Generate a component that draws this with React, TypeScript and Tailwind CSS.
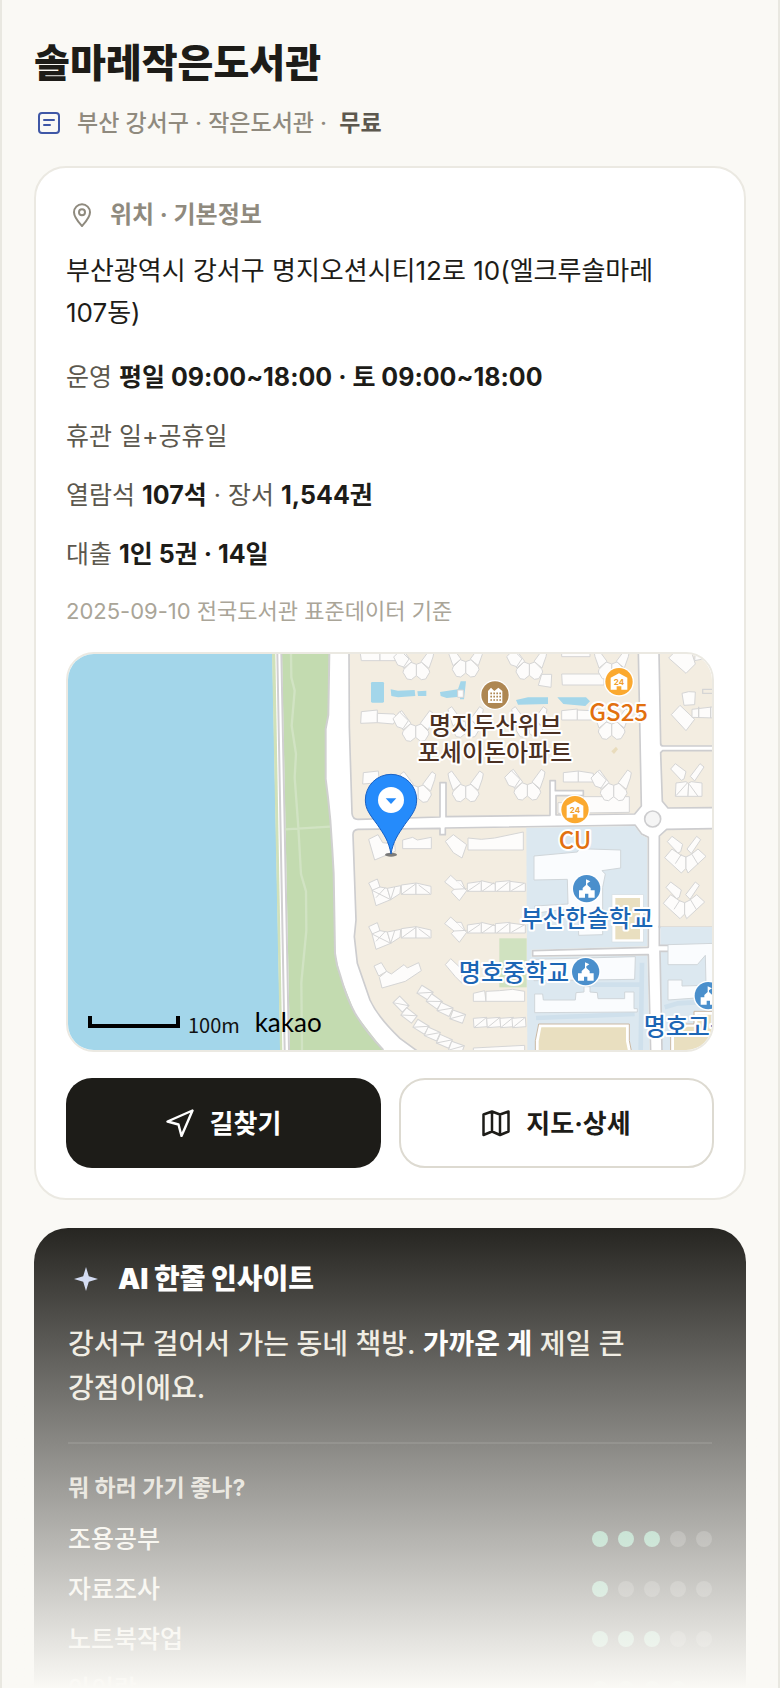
import React from "react";

type Pt = string;

const fontStack = "font-['Inter','Noto_Sans_CJK_KR',sans-serif]";

/* ---------- map data ---------- */

function Butterfly({ x, y }: { x: number; y: number }) {
  const half = (
    <>
      <polygon points="0,-46 16,-52 38,-30 40,-22 28,-2 15,0 0,-12" />
      <polygon points="14,-54 42,-92 53,-84 50,-68 38,-34 26,-44" />
    </>
  );
  return (
    <g transform={`translate(${x} ${y})`}>
      {half}
      <g transform="scale(-1 1)">{half}</g>
    </g>
  );
}

function Arm({ x, y }: { x: number; y: number }) {
  return (
    <g transform={`translate(${x} ${y})`}>
      <polygon points="-68,-68 -48,-88 -22,-62 -38,-38 -56,-44" />
    </g>
  );
}

function WideButterfly({ x, y, boxed }: { x: number; y: number; boxed?: boolean }) {
  return (
    <g transform={`translate(${x} ${y})`}>
      <polygon points="-54,-82 -40,-98 -8,-74 -14,-52 -22,-48" />
      <polygon points="5,-60 34,-98 46,-88 18,-46" />
      {boxed ? (
        <>
          <polygon points="-38,-40 -8,-44 0,-38 -2,0 -40,0" />
          <polygon points="-2,0 0,-40 8,-44 40,-40 40,0" />
          <path d="M-38 -2 L-4 -40 M2 -36 L28 0" />
        </>
      ) : (
        <>
          <polygon points="-40,-60 -62,-34 -12,12 2,-2 2,-36 -14,-42" />
          <polygon points="2,-2 2,-36 18,-44 38,-60 62,-38 8,12" />
          <path d="M-30 -16 L-12 -44 M38 -14 L20 -44" />
        </>
      )}
    </g>
  );
}

function WestWing({ y }: { y: number }) {
  return (
    <g transform={`translate(902 ${y})`}>
      <polygon points="0,12 26,0 34,24 12,36" />
      <polygon points="10,34 34,24 56,28 66,62 22,80" />
      <polygon points="56,28 96,20 94,44 66,62" />
      <polygon points="98,18 142,12 142,46 98,46" />
      <polygon points="142,12 187,22 187,46 142,46" />
      <path d="M10 34 L66 62 M66 62 L78 24 M98 46 L142 14 M150 18 L184 44 M22 56 L50 26" />
    </g>
  );
}

function EastWing({ y }: { y: number }) {
  return (
    <g transform={`translate(1130 ${y})`}>
      <polygon points="0,20 18,0 44,24 66,46 44,76 20,50 28,42" />
      <polygon points="68,24 110,18 110,48 68,48" />
      <polygon points="110,16 152,26 152,48 110,48" />
      <polygon points="152,20 196,16 196,48 152,48" />
      <polygon points="196,18 242,24 242,48 196,48" />
      <path d="M28 42 L66 40 M34 16 L50 16 L60 38 M68 48 L106 22 M112 48 L148 22 M156 48 L192 20 M200 46 L238 24" />
    </g>
  );
}

function Chain({ points }: { points: number[][] }) {
  return (
    <>
      {points.map(([x, y, a], i) => (
        <g key={i} transform={`translate(${x} ${y}) rotate(${a})`}>
          <polygon points="-20,-13 20,-16 22,12 -18,15" />
          <path d="M-18 15 L20 -16" />
        </g>
      ))}
    </>
  );
}

const buildings: Pt[] = [
  "876,-8 936,-8 936,20 880,20",
  "936,-8 992,-4 981,20 936,20",
  "880,173 928,168 928,206 878,208",
  "928,178 978,180 988,190 976,210 928,206",
  "886,356 931,351 934,386 884,390",
  "1421,61 1451,61 1449,100 1411,94",
  "1481,60 1608,60 1608,93 1483,93",
  "1481,-8 1566,-8 1566,8 1481,8",
  "1481,170 1528,165 1528,198 1481,198",
  "1528,168 1571,170 1571,198 1528,198",
  "1486,356 1531,351 1531,384 1486,384",
  "1531,351 1576,358 1576,384 1531,384",
  "1546,428 1684,428 1684,475 1470,478 1470,446 1546,446",
  "1802,12 1822,-8 1870,-8 1882,30 1854,58",
  "1882,-8 1910,-8 1910,14 1880,20",
  "1842,118 1862,113 1882,114 1880,152 1848,154",
  "1810,182 1836,154 1880,196 1854,230",
  "1872,166 1940,158 1940,192 1872,190",
  "902,556 930,542 944,566 980,570 982,592 920,618",
  "1004,558 1034,550 1048,558 1090,550 1090,584 1004,584",
  "1132,562 1156,542 1196,572 1182,612 1156,596",
  "1200,552 1240,556 1280,552 1366,534 1366,588 1200,588",
  "918,936 940,926 956,952 932,966",
  "934,970 956,952 970,960 1008,932 1018,942 1052,926 1060,950 1012,982 942,1002",
  "1132,932 1148,914 1182,946 1182,988 1162,968",
  "1216,1018 1250,1010 1254,1042 1216,1042",
  "1254,1012 1294,1010 1334,1006 1370,1012 1370,1042 1254,1042",
  "1216,1182 1370,1174 1370,1195 1216,1195",
];

const campus: Pt[] = [
  "1398,606 1528,594 1534,584 1658,588 1658,642 1602,650 1612,660 1604,700 1604,842 1532,844 1530,760 1400,778 1400,756 1500,750 1498,676 1398,678",
  "1398,916 1702,908 1700,976 1398,980",
  "1400,1020 1424,1020 1426,1038 1522,1038 1524,1016 1548,1014 1548,998 1566,998 1566,1014 1588,1016 1590,1034 1670,1034 1670,1014 1698,1014 1698,1064 1708,1064 1708,1074 1400,1076",
  "1800,872 1940,868 1940,1028 1800,1038 1800,978 1842,978 1842,996 1914,994 1912,904 1888,932 1800,932",
];

function Label({
  x,
  y,
  fill,
  anchor = "middle",
  children,
}: {
  x: number;
  y: number;
  fill: string;
  anchor?: "start" | "middle";
  children: React.ReactNode;
}) {
  return (
    <text
      x={x}
      y={y}
      textAnchor={anchor}
      fill={fill}
      stroke="#ffffff"
      strokeWidth={12}
      strokeLinejoin="round"
      paintOrder="stroke"
      className="font-['Noto_Sans_CJK_KR',sans-serif] text-[72px] font-medium"
    >
      {children}
    </text>
  );
}

function Store({ x, y }: { x: number; y: number }) {
  return (
    <g transform={`translate(${x} ${y})`}>
      <circle r="45" fill="#fff" />
      <circle r="41" fill="#fba92f" />
      <path d="M0 -25 L25 -12 V24 H7 V14 H-7 V24 H-25 V-12 Z" fill="#fff" />
      <text y="11" textAnchor="middle" fill="#f0a02c" className="font-['Inter',sans-serif] text-[24px] font-bold">
        24
      </text>
    </g>
  );
}

function School({ x, y }: { x: number; y: number }) {
  return (
    <g transform={`translate(${x} ${y})`}>
      <circle r="45" fill="#fff" />
      <circle r="41" fill="#4a8fcc" />
      <path
        d="M-2 -28 L11 -22 L2 -16 V-11 L12 -2 V5 H24 V27 H5 V15 H-5 V27 H-23 V5 H-12 V-2 L-2 -11 Z"
        fill="#fff"
      />
    </g>
  );
}

function MapDrawing() {
  return (
    <svg
      viewBox="0 0 1932 1188"
      preserveAspectRatio="xMidYMid slice"
      className="block h-full w-full"
      role="img"
      aria-label="솔마레작은도서관 위치 지도"
    >
      <rect width="1932" height="1188" fill="#ffffff" />
      {/* shore */}
      <polygon points="0,0 613,0 637,1188 0,1188" fill="#a3d6ea" />
      <polygon points="612,0 622,0 643,1188 636,1188" fill="#d0e1ba" />
      <polygon points="642,0 784,0 781,183 773,225 773,375 780,430 787,498 793,588 797,658 801,898 818,968 861,1078 946,1188 666,1188" fill="#c3dbb0" />
      <path
        d="M784 0 L781 183 L773 225 V375 L780 430 L787 498 L793 588 L797 658 L801 898 Q805 935 818 968 Q835 1030 861 1078 Q895 1135 946 1188"
        fill="none"
        stroke="#d0d0d0"
        strokeWidth="6"
      />
      <path d="M628 0 L650 1188 M640 0 L663 1188" stroke="#d0cfd1" strokeWidth="6" fill="none" />
      <path
        d="M669 0 L670 70 L680 110 L671 215 L684 300 L680 370 L691 520 L699 660 L714 712 L715 830 L700 985 L702 1188 M651 526 L786 518"
        stroke="#d1e3c3"
        strokeWidth="7"
        fill="none"
      />

      {/* city blocks */}
      <g stroke="#cdcdcf" strokeWidth="5" strokeLinejoin="round">
        <path
          fill="#f3ede1"
          d="M843 -6 L844 218 L852 478 Q854 496 870 496 L1116 489 V386 H1134 V488 L1446 484 V380 H1462 V410 H1546 V425 H1464 V483 L1700 480 L1720 456 L1711 -6 Z"
        />
        <path
          fill="#f3ede1"
          d="M870 526 L1116 523 V542 H1132 V522 L1701 513 L1721 540 L1741 550 V880 L1394 890 V906 L1741 902 L1748 1194 H1052 L996 1153 Q930 1090 906 1038 L868 928 L859 848 L864 798 L855 542 Q855 527 870 526 Z"
        />
        <path fill="#f3ede1" d="M1773 -6 L1778 270 Q1779 276 1786 276 H1940 V-6 Z" />
        <path fill="#f3ede1" d="M1784 290 H1940 V461 L1800 462 L1783 442 L1778 296 Z" />
        <path fill="#f3ede1" d="M1796 526 L1940 524 V820 H1774 V546 Z" />
      </g>
      <path
        fill="#dce8f0"
        d="M1375 521 L1700 516 L1719 542 L1738 552 V877 L1391 887 V909 L1738 905 L1745 1188 H1378 Z"
      />
      <path fill="#dce8f0" d="M1777 819 H1932 V1188 H1782 L1778 892 H1800 V874 H1777 Z" />
      <path d="M1774 815 V874 H1800 M1800 892 H1776 L1782 1190" fill="none" stroke="#cdcdcf" strokeWidth="5" />
      <path
        d="M1404 1092 L1700 1080 M1722 926 L1718 1188 M1560 992 H1720 M1790 1060 L1830 1048 L1932 1042"
        fill="none"
        stroke="#cfe0ec"
        strokeWidth="14"
      />
      <rect x="1294" y="853" width="82" height="147" fill="#d0e2c0" />
      <circle cx="1754" cy="495" r="24" fill="#f5f5f5" stroke="#cdcdcf" strokeWidth="5" />

      {/* ponds */}
      <g fill="#a3d6ea">
        <rect x="909" y="84" width="39" height="62" rx="4" />
        <path d="M968 106 L990 110 L1040 108 L1042 126 L1010 128 L990 130 L970 126 Z M1048 112 L1075 110 V126 L1050 126 Z" />
        <path d="M1116 114 L1170 106 L1178 82 L1194 82 L1188 136 L1176 136 V128 L1136 132 L1118 126 Z" />
        <path d="M1344 138 L1380 130 H1440 V150 L1350 152 Z M1468 130 H1554 L1566 142 L1552 156 L1486 150 Z" />
      </g>
      <path d="M1630 292 L1644 278 L1650 286 L1638 300 Z" fill="#e9dcbc" />

      {/* buildings */}
      <g fill="#fdfcfb" stroke="#d5d5d5" strokeWidth="3" strokeLinejoin="round">
        {buildings.map((p) => (
          <polygon key={p} points={p} />
        ))}
        <rect x="1169" y="108" width="17" height="22" />
        {[
          [1045, 77],
          [1193, 69],
          [1043, 262],
          [1193, 250],
          [1050, 445],
          [1193, 443],
          [1384, 76],
          [1631, 76],
          [1384, 250],
          [1631, 256],
          [1378, 438],
          [1637, 440],
        ].map(([x, y]) => (
          <Butterfly key={`${x}-${y}`} x={x} y={y} />
        ))}
        {[
          [1045, 77],
          [1043, 262],
          [1378, 438],
          [1637, 440],
          [1384, 76],
        ].map(([x, y]) => (
          <Arm key={`${x}-${y}`} x={x} y={y} />
        ))}
        <WideButterfly x={1862} y={427} boxed />
        <WideButterfly x={1852} y={645} />
        <WideButterfly x={1848} y={782} />
        <WestWing y={675} />
        <WestWing y={806} />
        <EastWing y={664} />
        <EastWing y={789} />
        <Chain
          points={[
            [1070, 1016, 36],
            [1098, 1042, 40],
            [1130, 1066, 30],
            [1168, 1088, 24],
            [998, 1050, 50],
            [1022, 1084, 42],
            [1058, 1118, 36],
            [1092, 1140, 28],
            [1128, 1162, 28],
            [1164, 1182, 24],
            [1236, 1106, 0],
            [1276, 1106, 0],
            [1316, 1106, 0],
            [1352, 1106, 0],
          ]}
        />
        <g stroke="#d0d6da" fill="#fafcfe">
          {campus.map((p) => (
            <polygon key={p} points={p} />
          ))}
        </g>
        <path d="M1940 106 H1904 V118 H1940 M1892 158 V192 M1928 158 V192" fill="none" strokeWidth="4" />
      </g>

      {/* school grounds */}
      <g fill="#e9dfc0">
        <rect x="1632" y="722" width="94" height="142" fill="#fff" stroke="#d6dde2" strokeWidth="2" />
        <rect x="1642" y="732" width="74" height="124" />
        <path d="M1402 1200 V1160 L1412 1110 H1684 V1160 L1692 1200 Z" fill="#fff" stroke="#cbb9a4" strokeWidth="3" />
        <path d="M1412 1200 V1162 L1420 1120 H1674 V1162 L1682 1200 Z" />
        <path d="M1808 1200 V1130 L1850 1110 H1878 V1072 H1940 V1200 Z" fill="#fff" stroke="#cbb9a4" strokeWidth="3" />
        <path d="M1818 1200 V1140 L1858 1118 H1888 V1082 H1940 V1200 Z" />
      </g>

      {/* places */}
      <g transform="translate(1281 123)">
        <circle r="45" fill="#fff" />
        <circle r="41" fill="#ae8752" />
        <path d="M-21 24 V-12 L-12 -22 L-2 -12 L10 -22 L22 -12 V24 Z" fill="#fff" />
        <path d="M-14 -5 H18 M-14 5 H18 M-14 15 H18" stroke="#ae8752" strokeWidth="5" strokeDasharray="5 4" />
      </g>
      <Store x={1653} y={83} />
      <Store x={1521} y={467} />
      <School x={1556} y={704} />
      <School x={1553} y={953} />
      <School x={1921} y={1025} />
      <Label x={1282} y={241} fill="#4b3022">명지두산위브</Label>
      <Label x={1281} y={320} fill="#4b3022">포세이돈아파트</Label>
      <Label x={1652} y={200} fill="#e2700f">GS25</Label>
      <Label x={1521} y={585} fill="#e2700f">CU</Label>
      <Label x={1557} y={820} fill="#1c66b5">부산한솔학교</Label>
      <Label x={1338} y={980} fill="#1c66b5">명호중학교</Label>
      <Label x={1727} y={1143} fill="#1c66b5" anchor="start">명호고등학교</Label>

      {/* pin */}
      <ellipse cx="969" cy="602" rx="18" ry="6" fill="#555" opacity=".75" />
      <path
        d="M969 600 C962 560 948 542 928 512 C906 482 892 466 892 438 A77 77 0 0 1 1046 438 C1046 466 1032 482 1010 512 C990 542 976 560 969 600 Z"
        fill="#258bfb"
        stroke="#1a62c4"
        strokeWidth="3"
      />
      <circle cx="969" cy="438" r="39" fill="#fff" />
      <polygon points="953,433 985,433 969,450" fill="#258bfb" />

      {/* scale */}
      <path d="M66 1086 V1116 H330 V1086" fill="none" stroke="#000" strokeWidth="12" />
      <text x="360" y="1138" fill="#111" className="font-['Noto_Sans_CJK_KR',sans-serif] text-[60px] font-normal">100m</text>
      <text x="560" y="1133" fill="#000" className="font-['Lato',sans-serif] text-[78px]">kakao</text>
    </svg>
  );
}

/* ---------- icons ---------- */

const NoteIcon = () => (
  <svg viewBox="0 0 24 24" className="size-6 shrink-0" fill="none" stroke="#3f57a6" strokeWidth="2" strokeLinecap="round" aria-hidden="true">
    <rect x="2" y="2" width="20" height="20" rx="3" />
    <path d="M7 9 H17 M7 14 H13" />
  </svg>
);

const PinIcon = () => (
  <svg viewBox="0 0 24 24" className="size-6 shrink-0" fill="none" stroke="#8f8a7e" strokeWidth="2" aria-hidden="true">
    <path d="M12 23 C8 18.5 4 14.5 4 9.3 A8 8 0 0 1 20 9.3 C20 14.5 16 18.5 12 23 Z" strokeLinejoin="round" />
    <circle cx="12" cy="9.3" r="3" />
  </svg>
);

const RouteIcon = () => (
  <svg viewBox="0 0 28 28" className="size-7 shrink-0" fill="none" stroke="currentColor" strokeWidth="2.4" strokeLinejoin="round" aria-hidden="true">
    <path d="M26.500 1.500 L1.500 12.500 L12.500 15.500 L15.500 27 Z" />
  </svg>
);

const FoldMapIcon = () => (
  <svg viewBox="0 0 28 28" className="size-7 shrink-0" fill="none" stroke="currentColor" strokeWidth="2.5" strokeLinejoin="round" aria-hidden="true">
    <path d="M1.500 5.500 L10 2.500 L18 5.500 L26.500 2.500 V22.500 L18 26 L10 22.500 L1.500 26 Z M10 2.500 V22.500 M18 5.500 V26" />
  </svg>
);

const SparkIcon = () => (
  <svg viewBox="0 0 24 24" className="size-6 shrink-0" fill="#cdd7f2" aria-hidden="true">
    <path d="M12 0 L14.800 9.200 L24 12 L14.800 14.800 L12 24 L9.200 14.800 L0 12 L9.200 9.200 Z" />
  </svg>
);

/* ---------- page ---------- */

const purposes = [
  { name: "조용공부", score: 3 },
  { name: "자료조사", score: 1 },
  { name: "노트북작업", score: 3 },
  { name: "아이랑", score: 4 },
];

function Strong({ children }: { children: React.ReactNode }) {
  return <b className="font-bold text-[#1d1c18]">{children}</b>;
}

export default function App() {
  return (
    <main
      className={`relative h-screen overflow-hidden border-x-2 border-[#e9e8e1] bg-[#faf9f5] px-8 pt-8 break-keep text-[#1d1c18] ${fontStack}`}
    >
      <h1 className="text-[39px] leading-[62px] font-black">솔마레작은도서관</h1>
      <p className="mt-[10px] flex items-center gap-4 pl-[3px] text-[23px] leading-[38px] font-medium text-[#8f8a7e]">
        <NoteIcon />
        <span>
          부산 강서구 · 작은도서관 ·&nbsp; <b className="font-bold text-[#5c584e]">무료</b>
        </span>
      </p>

      <section className="mt-6 rounded-[32px] border-2 border-[#ebe9e2] bg-white p-[30px]">
        <h2 className="flex items-center gap-4 pl-1 text-[24px] leading-[34px] font-bold text-[#8f8a7e]">
          <PinIcon />
          위치 · 기본정보
        </h2>
        <p className="mt-[18px] text-[26px] leading-[42px]">부산광역시 강서구 명지오션시티12로 10(엘크루솔마레 107동)</p>
        <div className="mt-6 flex flex-col gap-[21px] text-[25px] leading-[38px] text-[#5c584e]">
          <p>
            운영 <Strong>평일 09:00~18:00 · 토 09:00~18:00</Strong>
          </p>
          <p>휴관 일+공휴일</p>
          <p>
            열람석 <Strong>107석</Strong> · 장서 <Strong>1,544권</Strong>
          </p>
          <p>
            대출 <Strong>1인 5권 · 14일</Strong>
          </p>
          <p className="text-[22px] leading-[34px] text-[#aaa598]">2025-09-10 전국도서관 표준데이터 기준</p>
        </div>
        <div className="mt-6 h-[400px] overflow-hidden rounded-[28px] border-2 border-[#ebe9e2]">
          <MapDrawing />
        </div>
        <div className="mt-[26px] grid grid-cols-2 gap-[18px] text-[26px] font-bold">
          <button type="button" className="flex h-[90px] items-center justify-center gap-4 rounded-[26px] bg-[#1d1c18] text-white">
            <RouteIcon />
            길찾기
          </button>
          <button type="button" className="flex h-[90px] items-center justify-center gap-4 rounded-[26px] border-2 border-[#dddad1] bg-white">
            <FoldMapIcon />
            지도·상세
          </button>
        </div>
      </section>

      <section className="mt-7 rounded-[34px] bg-[#1d1c18] px-[34px] pt-8 pb-8">
        <h2 className="flex items-center gap-5 pl-[6px] text-[28px] leading-[38px] font-black text-white">
          <SparkIcon />
          AI 한줄 인사이트
        </h2>
        <p className="mt-6 text-[28px] leading-[44px] font-medium text-[#ece8dd]">
          강서구 걸어서 가는 동네 책방. <b className="font-bold text-white">가까운 게</b> 제일 큰 강점이에요.
        </p>
        <hr className="mt-8 border-t-2 border-white/10" />
        <h3 className="mt-6 text-[23px] leading-[40px] font-bold text-[#d5d1c6]">뭐 하러 가기 좋나?</h3>
        <ul className="mt-[6px] text-[25px] leading-[50px] font-medium text-[#f6f3ea]">
          {purposes.map(({ name, score }) => (
            <li key={name} className="flex items-center justify-between">
              {name}
              <span className="flex gap-[10px]" role="img" aria-label={`5점 중 ${score}점`}>
                {[1, 2, 3, 4, 5].map((n) => (
                  <span key={n} className={n <= score ? "size-4 rounded-full bg-[#68b995]" : "size-4 rounded-full bg-white/20"} />
                ))}
              </span>
            </li>
          ))}
        </ul>
      </section>

      <div className="pointer-events-none absolute -inset-x-[2px] bottom-0 h-[480px] bg-linear-to-b from-[#faf9f5]/0 to-[#faf9f5]" />
    </main>
  );
}
